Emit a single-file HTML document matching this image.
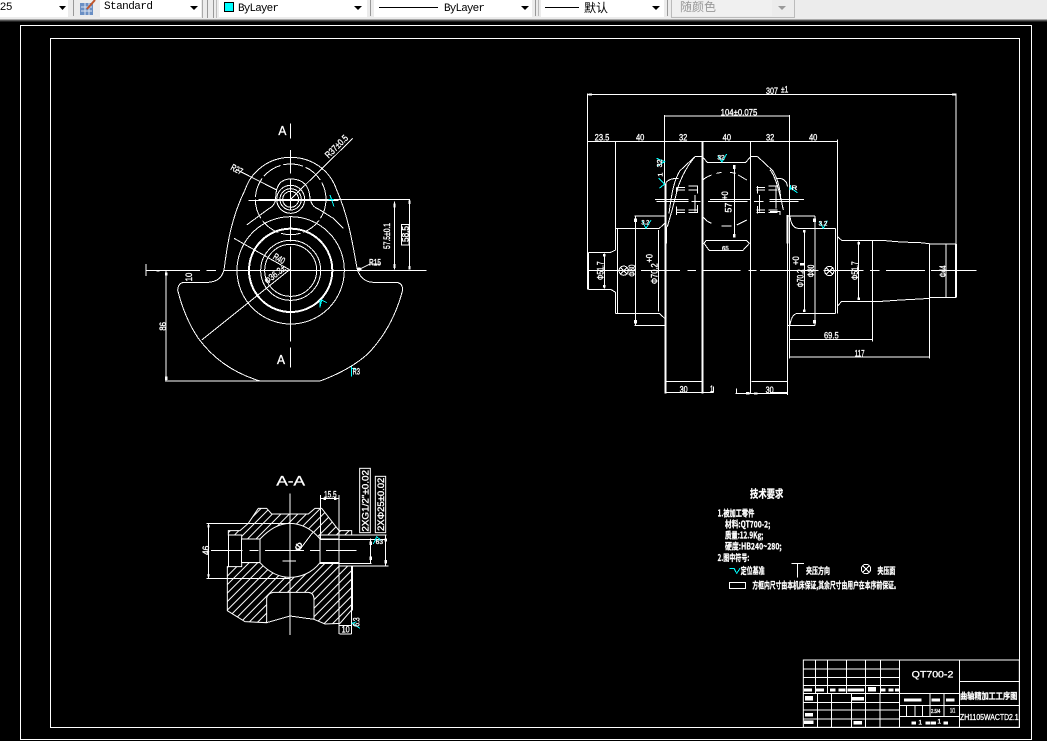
<!DOCTYPE html>
<html><head><meta charset="utf-8"><style>
html,body{margin:0;padding:0;background:#000;width:1047px;height:741px;overflow:hidden}
svg{display:block;position:absolute;left:0;top:0}
.l{fill:none;stroke:#fff;stroke-width:3;shape-rendering:crispEdges}
.b{fill:none;stroke:#fff;stroke-width:6;shape-rendering:crispEdges}
.c{fill:none;stroke:#0ff;stroke-width:3;shape-rendering:crispEdges}
.f{fill:#fff;stroke:none;shape-rendering:crispEdges}
.t{fill:#fff;stroke:#fff;stroke-width:1;font-family:"Liberation Sans","Noto Sans CJK SC",sans-serif;font-size:28px}
.k{fill:#fff;stroke:#fff;stroke-width:.8;font-family:"Noto Sans CJK SC","Liberation Sans",sans-serif;font-size:27px;font-weight:700}
.m{font-family:"Liberation Mono","Noto Sans CJK SC",monospace;font-size:11px;fill:#000}
.n{font-family:"Liberation Sans","Noto Sans CJK SC",sans-serif;font-size:12px;fill:#000}
</style></head><body>
<svg width="1047" height="741" viewBox="0 0 1047 741" xmlns="http://www.w3.org/2000/svg">
<defs>
<pattern id="h" width="18" height="18" patternUnits="userSpaceOnUse" patternTransform="rotate(-45)"><rect width="18" height="3" y="0" fill="#fff"/></pattern>
</defs>
<rect width="1047" height="741" fill="#000"/>
<!-- toolbar -->
<rect width="1047" height="20" fill="#ececec"/>
<rect y="19" width="1047" height="1" fill="#a8a8a8"/><rect y="20" width="1047" height="1" fill="#555"/><rect y="21" width="1047" height="1" fill="#222"/>
<rect x="0" width="68" height="17" fill="#fff"/>
<rect x="73" width="1" height="16" fill="#999"/>
<rect x="100" width="101" height="17" fill="#fff"/>
<rect x="202" y="0" width="1" height="18" fill="#aaa"/><rect x="207" y="0" width="1" height="18" fill="#999"/><rect x="213" y="0" width="1" height="18" fill="#999"/><rect x="216" y="0" width="1" height="18" fill="#bbb"/>
<rect x="219" width="148" height="17" fill="#fff"/>
<rect x="370" width="1" height="16" fill="#999"/>
<rect x="374" width="158" height="17" fill="#fff"/>
<rect x="535" width="1" height="16" fill="#999"/><rect x="538" width="1" height="16" fill="#bbb"/>
<rect x="541" width="123" height="17" fill="#fff"/>
<rect x="667" width="1" height="16" fill="#999"/>
<rect x="672" width="100" height="16" fill="#f0f0f0"/>
<path d="M671.500 0V17.500H794.500V0" fill="none" stroke="#bbb"/>
<text x="0" y="10" class="n" style="font-size:11px">25</text>
<path d="M59 6h7l-3.500 4z M190 6h8l-4 4z M354 6h8l-4 4z M521 6h8l-4 4z M652 6h8l-4 4z" fill="#000"/>
<path d="M778 6h8l-4 4z" fill="#999"/>
<rect x="80" y="3" width="13" height="12" fill="#6a8fc4"/>
<path d="M81 7h11M81 11h11M85 3v12M89 3v12" stroke="#dde6f2" fill="none"/>
<path d="M87 9L95 0" stroke="#c0552a" stroke-width="2"/>
<text x="104" y="9" class="m" textLength="49">Standard</text>
<rect x="224.500" y="2.500" width="9" height="9" fill="#0ff" stroke="#000"/>
<text x="238" y="11" class="m" textLength="41">ByLayer</text>
<path d="M379 7.500H438" stroke="#000"/>
<text x="444" y="11" class="m" textLength="41">ByLayer</text>
<path d="M545 7.500H579" stroke="#000"/>
<text x="584" y="12" class="n">默认</text>
<text x="680" y="11" class="n" style="fill:#999">随颜色</text>
<!-- frames -->
<path d="M20.500 25.500H1031.500V739.500H20.500Z M50.500 38.500H1019.500V727.500H50.500Z" fill="none" stroke="#fff"/>

<!-- front view -->
<g transform="translate(130,110) scale(.33333)">
<path class="l" d="M282,480C290,420 300,330 345,240C365,180 420,142 482,142C545,142 600,180 620,240C660,330 670,420 682,478C690,505 710,517 730,517L800,517Q818,520 818,540C800,610 770,670 720,725C680,765 620,795 570,813L390,813C330,795 260,760 205,685C175,640 155,590 143,540Q145,520 160,517L235,517C260,515 275,505 282,480"/>
<circle class="l" cx="482" cy="268" r="106" stroke-dasharray="60 8"/>
<path class="l" d="M350,345L415,297Q437,285 437,265Q437,207 482,207Q537,207 540,265Q545,290 565,297L610,325L640,355"/>
<circle class="l" cx="482" cy="268" r="42"/><circle class="l" cx="482" cy="268" r="32"/><circle class="l" cx="482" cy="268" r="24"/>
<circle class="l" cx="482" cy="481" r="161"/>
<circle class="b" cx="482" cy="481" r="125"/>
<circle class="l" cx="482" cy="481" r="90"/><circle class="l" cx="482" cy="481" r="78"/>
<path class="l" d="M482,40V85M482,712V772M482,120V190M482,207V300M482,318V395M482,410V695"/>
<path class="l" d="M48,462V498M48,481H210M230,481H258M280,481H890M80,483H88"/>
<path class="l" d="M355,271H625M385,268H840M793,275V478M838,268V478M685,481H840"/>
<rect class="l" x="815" y="343" width="22" height="62"/>
<path class="l" d="M318,178L440,240M668,85L482,268M215,690L475,482M312,385L480,480M688,478L720,462M720,462H752M108,483V812M105,813H390"/>
<rect class="f" x="790" y="280" width="7" height="12"/><rect class="f" x="790" y="462" width="7" height="12"/><rect class="f" x="835" y="272" width="7" height="10"/><rect class="f" x="835" y="468" width="7" height="10"/><rect class="f" x="105" y="487" width="8" height="10"/><rect class="f" x="105" y="800" width="8" height="10"/><circle class="f" cx="688" cy="478" r="6"/>
<path class="c" d="M600,255L612,290M596,268H612M570,592L575,570L590,578M570,570V592M665,770V800M665,775L680,780"/>
<text class="t" x="445" y="75" style="font-size:40px" textLength="24" lengthAdjust="spacingAndGlyphs">A</text>
<text class="t" x="441" y="762" style="font-size:40px" textLength="24" lengthAdjust="spacingAndGlyphs">A</text>
<text class="t" transform="translate(780,417) rotate(-90)" textLength="78" lengthAdjust="spacingAndGlyphs">57.5±0.1</text>
<text class="t" transform="translate(836,396) rotate(-90)" textLength="48" lengthAdjust="spacingAndGlyphs">58.5</text>
<text class="t" transform="translate(300,178) rotate(28)" textLength="36" lengthAdjust="spacingAndGlyphs">R27</text>
<text class="t" transform="translate(596,146) rotate(-45)" textLength="85" lengthAdjust="spacingAndGlyphs">R37±0.5</text>
<text class="t" transform="translate(427,445) rotate(30)" textLength="36" lengthAdjust="spacingAndGlyphs">R40</text>
<text class="t" transform="translate(412,523) rotate(-38)" textLength="72" lengthAdjust="spacingAndGlyphs">Φ36.3±</text>
<text class="t" x="717" y="466" textLength="36" lengthAdjust="spacingAndGlyphs">R15</text>
<text class="t" transform="translate(186,514) rotate(-90)" textLength="26" lengthAdjust="spacingAndGlyphs">10</text>
<text class="t" transform="translate(108,662) rotate(-90)" textLength="26" lengthAdjust="spacingAndGlyphs">86</text>
<text class="t" x="668" y="793" textLength="22" lengthAdjust="spacingAndGlyphs">R3</text>
</g>

<!-- side view left -->
<g transform="translate(570,80) scale(.33333)">
<path class="l" d="M52,40V628M55,517V628M52,43H630M284,105V310M284,108H630M52,184H630M137,184V510M55,517H122L137,510M55,628H122L137,637V700M142,445V700M137,445H268L284,430M137,700H268L284,715M265,450V695M193,408H284M197,408V737M193,737H286M103,520V625"/>
<path class="l" d="M55,571H195M213,571H330M352,571H378M398,571H512M535,571H560M580,571H630"/>
<path class="b" d="M287,310V940M397,184V940"/>
<path class="l" d="M542,184V940M287,905H397M545,905H630M287,938H430M497,941H630M430,920V938M500,925V940"/>
<path class="l" d="M375,230H397L412,247H527L542,230H563"/>
<path class="l" d="M375,230L330,272C312,300 305,340 297,400M375,230C345,265 325,310 318,345L305,395L292,440M289,440V490M287,310Q295,295 325,295"/>
<path class="l" d="M563,230L608,272C626,300 633,340 631,360"/>
<path class="l" d="M255,358H355M260,365H355M365,365H392M375,345V395M420,358H540M414,365H532M552,365H580M568,345V395M598,358H630M598,365H630"/>
<path class="l" d="M320,322H345M320,330H345M355,318H382V340M355,330H382M320,390H345M320,398H345M355,390H382M355,398H382V375M320,322V342M320,380V405"/>
<path class="l" d="M560,322H585M560,330H585M595,318H622M595,330H622M560,390H585M560,398H585M595,390H622M595,398H622M562,318V340M562,378V400"/>
<path class="l" d="M398,300Q410,290 425,285M440,280L455,277M480,277L497,280M505,285L530,300M398,410Q410,425 425,430M455,438H485M500,435L530,420M398,300V345M398,375V410M542,300V345M542,375V410"/>
<path class="l" d="M402,490L408,482H530L538,490L518,512H418Z"/>
<path class="l" d="M493,255V472"/>
<circle class="l" cx="161" cy="572" r="14"/><path class="l" d="M151,562L171,582M171,562L151,582"/>
<rect class="f" x="489" y="255" width="8" height="12"/><rect class="f" x="489" y="462" width="8" height="10"/><rect class="f" x="192" y="416" width="9" height="10"/><rect class="f" x="192" y="720" width="9" height="10"/><rect class="f" x="99" y="522" width="8" height="8"/><rect class="f" x="99" y="615" width="8" height="8"/><rect class="f" x="56" y="40" width="10" height="7"/><rect class="f" x="528" y="936" width="10" height="8"/><rect class="f" x="552" y="937" width="10" height="6"/>
<path class="c" d="M260,235L284,245L262,258M266,295L284,312L268,325M444,228L456,246L470,222M216,422L228,445L243,420"/>
<text class="t" x="588" y="42" textLength="36" lengthAdjust="spacingAndGlyphs">307</text>
<text class="t" x="452" y="107" textLength="110" lengthAdjust="spacingAndGlyphs">104±0.075</text>
<text class="t" x="74" y="182" textLength="44" lengthAdjust="spacingAndGlyphs">23.5</text>
<text class="t" x="198" y="182" textLength="25" lengthAdjust="spacingAndGlyphs">40</text>
<text class="t" x="327" y="182" textLength="25" lengthAdjust="spacingAndGlyphs">32</text>
<text class="t" x="458" y="182" textLength="25" lengthAdjust="spacingAndGlyphs">40</text>
<text class="t" x="588" y="182" textLength="25" lengthAdjust="spacingAndGlyphs">32</text>
<text class="t" x="329" y="937" textLength="24" lengthAdjust="spacingAndGlyphs">30</text>
<text class="t" x="420" y="936" textLength="10" lengthAdjust="spacingAndGlyphs">1</text>
<text class="t" x="587" y="939" textLength="24" lengthAdjust="spacingAndGlyphs">30</text>
<text class="t" x="456" y="511" textLength="20" lengthAdjust="spacingAndGlyphs" style="font-size:20px">65</text>
<text class="t" transform="translate(100,600) rotate(-90)" textLength="56" lengthAdjust="spacingAndGlyphs">Φ51.7</text>
<text class="t" transform="translate(195,590) rotate(-90)" textLength="36" lengthAdjust="spacingAndGlyphs">Φ80</text>
<text class="t" transform="translate(263,612) rotate(-90)" textLength="62" lengthAdjust="spacingAndGlyphs">Φ70.2</text>
<text class="t" transform="translate(247,548) rotate(-90)" textLength="26" lengthAdjust="spacingAndGlyphs">+0</text>
<text class="t" transform="translate(484,398) rotate(-90)" textLength="30" lengthAdjust="spacingAndGlyphs">57</text>
<text class="t" transform="translate(474,360) rotate(-90)" textLength="26" lengthAdjust="spacingAndGlyphs">+0</text>
<text class="t" transform="translate(276,262) rotate(-90)" textLength="24" lengthAdjust="spacingAndGlyphs" style="font-size:22px">32</text>
<text class="t" x="442" y="238" textLength="22" lengthAdjust="spacingAndGlyphs" style="font-size:20px">32</text>
<text class="t" x="214" y="434" textLength="24" lengthAdjust="spacingAndGlyphs" style="font-size:20px">3.2</text>
<text class="t" transform="translate(278,290) rotate(-90)" textLength="12" lengthAdjust="spacingAndGlyphs" style="font-size:20px">1</text>
</g>

<!-- side view right -->
<g transform="translate(770,80) scale(.33333)">
<path class="l" d="M-30,43H558M558,40V492M0,108H58M58,105V835M-30,184H203M203,178V445"/>
<path class="l" d="M55,408H135M135,408V737M52,737H135M60,410Q65,445 85,445H197M60,735Q65,700 85,700H197M197,445V700M203,445V700M103,450V695"/>
<path class="b" d="M52,405V490"/>
<path class="l" d="M52,490V945M0,905H52M0,938H52M0,941H52"/>
<path class="l" d="M203,470L215,481H335L392,486L450,488L478,491M203,678L215,664H335L392,660L450,657L478,655"/>
<path class="l" d="M308,481V785M478,491V835M478,492H558M478,652H558M528,492V652M558,492V652M266,485V660"/>
<path class="b" d="M558,492V652"/>
<path class="l" d="M-30,571H145M160,571H280M300,571H328M348,571H465M483,571H620"/>
<path class="l" d="M58,778H308M58,831H478"/>
<circle class="l" cx="178" cy="573" r="14"/><path class="l" d="M168,563L188,583M188,563L168,583"/>
<path class="l" d="M0,270C15,285 30,340 40,390M20,295H30Q52,300 52,320M18,320V385M0,358H102M0,365H85M0,395H30V405"/>
<rect class="f" x="129" y="416" width="9" height="10"/><rect class="f" x="129" y="720" width="9" height="10"/><rect class="f" x="99" y="450" width="8" height="8"/><rect class="f" x="99" y="688" width="8" height="8"/><rect class="f" x="262" y="486" width="8" height="8"/><rect class="f" x="262" y="652" width="8" height="8"/><rect class="f" x="546" y="40" width="10" height="7"/><rect class="f" x="90" y="549" width="14" height="7"/>
<path class="c" d="M60,322L82,338M62,315L60,328L72,322M148,425L160,445L172,422"/>
<text class="t" x="33" y="38" textLength="22" lengthAdjust="spacingAndGlyphs">±1</text>
<text class="t" x="117" y="182" textLength="25" lengthAdjust="spacingAndGlyphs">40</text>
<text class="t" x="162" y="776" textLength="44" lengthAdjust="spacingAndGlyphs">69.5</text>
<text class="t" x="254" y="830" textLength="30" lengthAdjust="spacingAndGlyphs">117</text>
<text class="t" transform="translate(100,622) rotate(-90)" textLength="54" lengthAdjust="spacingAndGlyphs">Φ70.2</text>
<text class="t" transform="translate(132,592) rotate(-90)" textLength="38" lengthAdjust="spacingAndGlyphs">Φ80</text>
<text class="t" transform="translate(264,600) rotate(-90)" textLength="56" lengthAdjust="spacingAndGlyphs">Φ51.7</text>
<text class="t" transform="translate(528,592) rotate(-90)" textLength="36" lengthAdjust="spacingAndGlyphs">Φ44</text>
<text class="t" transform="translate(87,555) rotate(-90)" textLength="26" lengthAdjust="spacingAndGlyphs">+0</text>
<text class="t" x="146" y="437" textLength="26" lengthAdjust="spacingAndGlyphs" style="font-size:20px">3.2</text>
<text class="t" x="64" y="330" textLength="18" lengthAdjust="spacingAndGlyphs" style="font-size:20px">R</text>
</g>

<!-- section A-A -->
<g transform="translate(190,460) scale(.33333)">
<path fill="url(#h)" stroke="#fff" stroke-width="3" d="M115,225V212H150L175,190L205,145H230L245,162H355L375,145H395L447,212H485V225H390V237C365,205 330,190 300,190C270,190 240,205 210,237H155V225Z"/>
<path fill="url(#h)" stroke="#fff" stroke-width="3" d="M112,320H155V308H210C240,340 270,352 300,352C330,352 365,340 390,308H447V318H485V450L450,490L405,492L372,478V415Q370,398 355,397H250Q232,400 230,415V488L165,485L112,452Z"/>
<path class="l" d="M115,225V320M115,225H155M447,225H485M155,237H210V308H155ZM390,237H447V308H390ZM230,488L300,468L372,478"/>
<path class="l" d="M447,318V522M485,318V522M448,522H485M448,497H485M447,212V320"/>
<path class="b" d="M486,320V452"/>
<path class="l" d="M300,100V525M278,303H318M63,271H158M178,271H205M225,271H342M360,271H388M408,271H500"/>
<path class="l" d="M50,190H300M50,355H300M55,190V355M392,105V235M447,105V212M392,115H447M392,225H590M392,238H590M390,310H545M447,318H595M542,235V310M586,225V318"/>
<path class="l" d="M370,215L330,268L310,272"/>
<rect class="f" x="400" y="112" width="8" height="8"/><rect class="f" x="432" y="112" width="8" height="8"/><rect class="f" x="53" y="195" width="6" height="8"/><rect class="f" x="53" y="342" width="6" height="8"/><rect class="f" x="538" y="245" width="8" height="10"/><rect class="f" x="538" y="290" width="8" height="10"/><rect class="f" x="583" y="235" width="8" height="10"/><rect class="f" x="583" y="300" width="8" height="10"/>
<rect x="509" y="25" width="32" height="193" fill="#000" stroke="#fff" stroke-width="3"/>
<rect x="556" y="49" width="31" height="169" fill="#000" stroke="#fff" stroke-width="3"/>
<path class="c" d="M550,252L560,230L572,240H555M486,490L510,505M486,490L500,485"/>
<text class="t" x="259" y="76" style="font-size:42px" textLength="86" lengthAdjust="spacingAndGlyphs">A-A</text>
<text class="t" transform="translate(535,215) rotate(-90)" textLength="185" lengthAdjust="spacingAndGlyphs">2XG1/2"±0.02</text>
<text class="t" transform="translate(582,213) rotate(-90)" textLength="160" lengthAdjust="spacingAndGlyphs">2XΦ25±0.02</text>
<text class="t" x="402" y="112" textLength="38" lengthAdjust="spacingAndGlyphs">15.5</text>
<text class="t" transform="translate(57,285) rotate(-90)" textLength="28" lengthAdjust="spacingAndGlyphs">46</text>
<text class="t" x="455" y="518" textLength="24" lengthAdjust="spacingAndGlyphs">10</text>
<text class="t" transform="translate(508,500) rotate(-90)" textLength="28" lengthAdjust="spacingAndGlyphs">6.3</text>
<text class="t" x="557" y="252" textLength="22" lengthAdjust="spacingAndGlyphs" style="font-size:20px">63</text>
<text class="t" transform="translate(325,275) rotate(-50)" textLength="26" lengthAdjust="spacingAndGlyphs">Φ</text>
</g>

<!-- tech requirements -->
<g transform="translate(700,480) scale(.33333)">
<text class="k" x="150" y="52" style="font-size:33px" textLength="100" lengthAdjust="spacingAndGlyphs">技术要求</text>
<text class="k" x="53" y="110" textLength="110" lengthAdjust="spacingAndGlyphs">1.被加工零件</text>
<text class="k" x="75" y="142" textLength="136" lengthAdjust="spacingAndGlyphs">材料:QT700-2;</text>
<text class="k" x="75" y="175" textLength="115" lengthAdjust="spacingAndGlyphs">质量:12.9Kg;</text>
<text class="k" x="75" y="208" textLength="170" lengthAdjust="spacingAndGlyphs">硬度:HB240~280;</text>
<text class="k" x="53" y="243" textLength="95" lengthAdjust="spacingAndGlyphs">2.图中符号:</text>
<path class="c" d="M88,265H102L110,280L120,265"/>
<text class="k" x="122" y="282" textLength="72" lengthAdjust="spacingAndGlyphs">定位基准</text>
<path class="l" d="M275,250H312M292,250V293"/>
<text class="k" x="318" y="282" textLength="72" lengthAdjust="spacingAndGlyphs">夹压方向</text>
<circle class="l" cx="498" cy="267" r="14"/><path class="l" d="M488,257L508,277M508,257L488,277"/>
<text class="k" x="532" y="282" textLength="54" lengthAdjust="spacingAndGlyphs">夹压面</text>
<rect class="l" x="88" y="307" width="48" height="18"/>
<text class="k" x="157" y="325" textLength="442" lengthAdjust="spacingAndGlyphs">方框内尺寸由本机床保证,其余尺寸由用户在本序前保证。</text>
</g>

<!-- title block -->
<g transform="translate(800,655) scale(.33333)">
<rect x="10" y="15" width="648" height="202" fill="#000" stroke="#fff" stroke-width="3"/>
<path class="l" d="M47,15V115M82,15V115M140,15V115M197,15V115M242,15V115M52,115V217M95,115V217M155,115V217M197,115V217M240,115V217M298,15V217M10,42H298M10,67H298M10,92H298M10,115H298M10,142H298M10,165H298M10,192H298M478,15V217M478,80H658M478,152H658M298,115H478M298,152H478M298,184H478M390,115V184M432,115V184M320,152V184M345,152V184M368,152V184"/>
<path class="f" d="M12,100h24v10h-24zM48,100h24v10h-24zM90,100h16v10h-16zM116,100h20v10h-20zM142,100h50v10h-50zM204,96h24v14h-24zM243,100h14v10h-14zM266,100h14v10h-14zM285,100h12v10h-12zM15,123h24v14h-24zM156,126h36v10h-36zM15,174h24v10h-24zM12,197h28v10h-28zM160,198h26v10h-26zM312,130h52v10h-52zM394,130h26v10h-26zM438,130h26v10h-26zM334,199h14v10h-14zM376,199h14v10h-14zM392,199h16v10h-16zM430,199h14v10h-14z"/>
<text class="t" x="335" y="68" style="font-size:28px" textLength="125" lengthAdjust="spacingAndGlyphs">QT700-2</text>
<text class="k" x="480" y="132" style="font-size:25px" textLength="172" lengthAdjust="spacingAndGlyphs">曲轴精加工工序图</text>
<text class="t" x="480" y="195" style="font-size:24px" textLength="176" lengthAdjust="spacingAndGlyphs">ZH1105WACTD2.1</text>
<text class="t" x="393" y="174" style="font-size:16px" textLength="28" lengthAdjust="spacingAndGlyphs">2.5/4</text>
<text class="t" x="450" y="173" style="font-size:18px" textLength="16" lengthAdjust="spacingAndGlyphs">1/1</text>
<text class="t" x="355" y="209" style="font-size:20px">1</text>
<text class="t" x="412" y="205" style="font-size:20px">1</text>
</g>
</svg>
</body></html>
